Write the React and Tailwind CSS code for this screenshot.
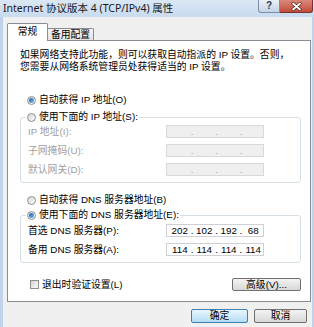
import { Fragment } from "react";

function Radio({ checked }) {
  return (
    <span className="inline-flex h-[9px] w-[9px] shrink-0 items-center justify-center rounded-full border border-[#8e8f8f] bg-linear-to-br from-[#d6d6d6] to-[#fcfcfc]">
      {checked && (
        <span className="h-[5px] w-[5px] rounded-full bg-linear-to-br from-[#1b5cb5] to-[#6ec0ef]" />
      )}
    </span>
  );
}

function Check() {
  return (
    <span className="inline-block h-[9px] w-[9px] shrink-0 border border-[#8e8f8f] bg-linear-to-br from-[#d6d6d6] to-[#fafafa]" />
  );
}

function IpBox({ parts, disabled }) {
  return (
    <div
      className={
        disabled
          ? "flex h-[13px] w-[98px] shrink-0 items-center overflow-hidden border border-[#d9d9d9] bg-[#efefef] pl-[3px] text-[#a8a8a8]"
          : "flex h-[13px] w-[98px] shrink-0 items-center overflow-hidden border border-[#cfd1d6] bg-white pl-[3px] text-black"
      }
    >
      {parts.map((p, i) => (
        <Fragment key={i}>
          {i > 0 && <span className="w-[5px] text-center">.</span>}
          <span className="w-[20px] text-center">{p}</span>
        </Fragment>
      ))}
    </div>
  );
}

function Row({ label, parts, disabled }) {
  return (
    <div className="flex h-[13px] items-center">
      <span className={disabled ? "w-[140px] pl-[2px] text-[#a0a0a0]" : "w-[140px] pl-[2px]"}>
        {label}
      </span>
      <IpBox parts={parts} disabled={disabled} />
    </div>
  );
}

export default function App() {
  const empty = ["", "", "", ""];

  return (
    <div className="flex h-[327px] w-[314px] flex-col overflow-hidden bg-[#bfd4eb] font-['Liberation_Sans','Noto_Sans_CJK_SC',sans-serif] text-[9.8px] leading-[12px] text-black">
      {/* title bar */}
      <div className="flex h-[17px] shrink-0 items-start bg-linear-to-b from-[#dbe7f4] to-[#c8dbef]">
        <span className="pl-[3px] pt-[2px] font-['Noto_Sans','Noto_Sans_CJK_SC',sans-serif] text-[10.5px] leading-[13px] text-[#1a1a1a]">
          Internet 协议版本 4 (TCP/IPv4) 属性
        </span>
        <div className="ml-auto mr-[1px] flex h-[13px]">
          <div className="flex w-[22px] items-center justify-center rounded-bl-[3px] border border-t-0 border-[#7d8fa8] bg-linear-to-b from-[#e9f0f8] to-[#c3d3e6] text-[10px] font-bold leading-[10px] text-[#2d3b50]">
            ?
          </div>
          <div className="flex w-[33px] items-center justify-center rounded-br-[3px] border border-l-0 border-t-0 border-[#7a2f28] bg-linear-to-b from-[#d9887b] to-[#c24a39]">
            <svg width="11" height="9" viewBox="0 0 11 9">
              <path d="M2 1.5 L9 7.5 M9 1.5 L2 7.5" stroke="#5b2018" strokeWidth="3.2" strokeLinecap="round" />
              <path d="M2 1.5 L9 7.5 M9 1.5 L2 7.5" stroke="#ffffff" strokeWidth="1.8" strokeLinecap="round" />
            </svg>
          </div>
        </div>
      </div>

      {/* client area */}
      <div className="ml-[3px] mr-[2px] flex flex-1 flex-col bg-[#f0f0f0]">
        {/* tabs */}
        <div className="mt-[6px] -mb-px flex h-[18px] items-end pl-[4px]">
          <div className="relative z-10 flex h-[18px] w-[41px] items-center justify-center rounded-t-[2px] border border-b-0 border-[#898c95] bg-white pb-[1px]">
            常规
          </div>
          <div className="mb-px flex h-[12px] w-[46px] items-center justify-center rounded-tr-[2px] border border-b-0 border-l-0 border-[#898c95] bg-linear-to-b from-[#f4f4f4] to-[#e2e2e2]">
            备用配置
          </div>
        </div>

        {/* panel */}
        <div className="ml-[4px] flex h-[262px] w-[304px] flex-col border border-[#898c95] bg-white">
          <p className="pl-[12px] pt-[8px]">
            如果网络支持此功能，则可以获取自动指派的 IP 设置。否则，
            <br />
            您需要从网络系统管理员处获得适当的 IP 设置。
          </p>

          <div className="mt-[21px] flex h-[12px] items-center gap-[3px] pl-[19px]">
            <Radio checked />
            <span>自动获得 IP 地址(O)</span>
          </div>

          <fieldset className="mt-[5px] ml-[12px] mr-[9px] rounded-[3px] border border-[#d5dfe5] pb-[6px] pl-[5px] pt-[2px]">
            <legend className="flex h-[12px] items-center gap-[3px] px-[1px]">
              <Radio />
              <span>使用下面的 IP 地址(S):</span>
            </legend>
            <div className="flex flex-col gap-[6px]">
              <Row label="IP 地址(I):" parts={empty} disabled />
              <Row label="子网掩码(U):" parts={empty} disabled />
              <Row label="默认网关(D):" parts={empty} disabled />
            </div>
          </fieldset>

          <div className="mt-[11px] flex h-[12px] items-center gap-[3px] pl-[19px]">
            <Radio />
            <span>自动获得 DNS 服务器地址(B)</span>
          </div>

          <fieldset className="mt-[3px] ml-[12px] mr-[9px] rounded-[3px] border border-[#d5dfe5] pb-[6px] pl-[5px] pt-[3px]">
            <legend className="flex h-[12px] items-center gap-[3px] px-[1px]">
              <Radio checked />
              <span>使用下面的 DNS 服务器地址(E):</span>
            </legend>
            <div className="flex flex-col gap-[6px]">
              <Row label="首选 DNS 服务器(P):" parts={["202", "102", "192", "68"]} />
              <Row label="备用 DNS 服务器(A):" parts={["114", "114", "114", "114"]} />
            </div>
          </fieldset>

          <div className="mt-[15px] flex h-[13px] items-center pl-[22px] pr-[9px]">
            <Check />
            <span className="ml-[3px]">退出时验证设置(L)</span>
            <button className="ml-auto flex h-[13px] w-[69px] items-center justify-center rounded-[2px] border border-[#707070] bg-linear-to-b from-[#f3f3f3] to-[#d8d8d8]">
              高级(V)...
            </button>
          </div>
        </div>

        {/* dialog buttons */}
        <div className="mt-[7px] flex justify-end gap-[6px] pr-[5px]">
          <button className="flex h-[14px] w-[57px] items-center justify-center rounded-[2px] border border-[#3c7fb1] bg-linear-to-b from-[#eaf6fd] to-[#b3dcf4]">
            确定
          </button>
          <button className="flex h-[14px] w-[53px] items-center justify-center rounded-[2px] border border-[#707070] bg-linear-to-b from-[#f3f3f3] to-[#d8d8d8]">
            取消
          </button>
        </div>
      </div>
    </div>
  );
}
